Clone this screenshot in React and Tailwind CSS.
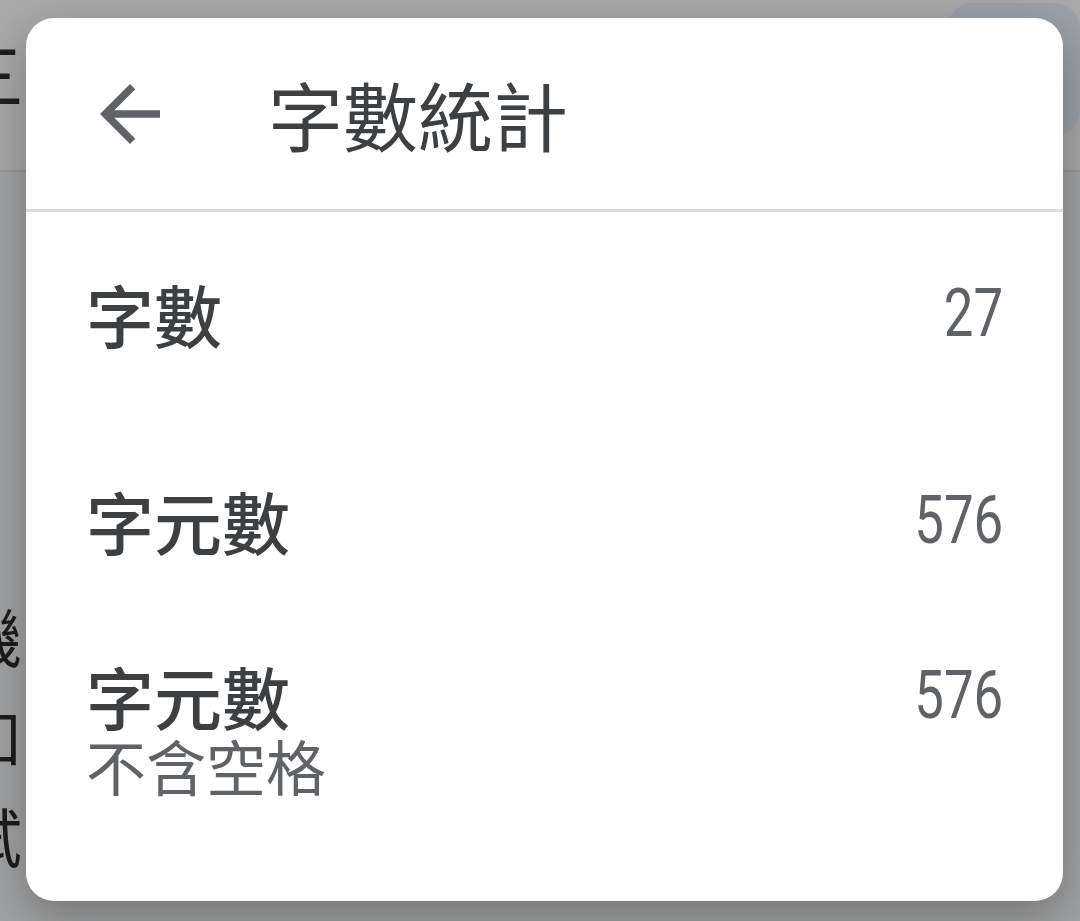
import React from "react";

const cjk = { fontFamily: '"Noto Sans CJK TC", "Noto Sans", sans-serif' };
const num = { fontFamily: 'Roboto, "Liberation Sans", sans-serif' };

function Row({ label, sub, value, className }) {
  return (
    <div className={"flex justify-between px-[60px] " + className}>
      <div className="flex flex-col">
        <span style={cjk} className="text-[68px] leading-[68px] font-medium text-[#3c4043]">{label}</span>
        {sub && (
          <span style={cjk} className="mt-[5px] text-[60px] leading-[60px] text-[#5f6368]">{sub}</span>
        )}
      </div>
      <span style={num} className="text-[66px] leading-[68px] text-[#5f6368] scale-x-[0.8] origin-right">{value}</span>
    </div>
  );
}

export default function App() {
  return (
    <div className="relative w-[1080px] h-[921px] overflow-hidden bg-[#a5a5a5]">
      {/* underlying page */}
      <div className="flex flex-col h-full">
        <div className="h-[172px] bg-[#a9a9a9] border-b-2 border-[#989898] flex items-start justify-between">
          <span style={cjk} className="-ml-[48px] mt-[36px] text-[72px] leading-none text-[#1f1f1f]">三</span>
          <div className="mt-[3px] w-[133px] h-[134px] rounded-[26px] bg-[#9ca1aa]" />
        </div>
        <div className="flex-1 flex flex-col pt-[412px] bg-[#a2a3a4]">
          {["機", "如", "試"].map((c) => (
            <span key={c} style={cjk} className="-ml-[42px] text-[64px] leading-[100px] text-[#1c1c1c]">{c}</span>
          ))}
        </div>
      </div>

      {/* dialog */}
      <div className="absolute left-[26px] top-[18px] w-[1037px] h-[883px] rounded-[28px] bg-white shadow-[0_16px_50px_rgba(0,0,0,0.3)] flex flex-col overflow-hidden">
        <div className="h-[191px] flex items-center pl-[85px] shrink-0">
          <svg viewBox="0 0 24 24" className="w-[90px] h-[90px] -ml-[26px]" fill="#5f6368">
            <path d="M20 11H7.83l5.59-5.59L12 4l-8 8 8 8 1.41-1.41L7.83 13H20v-2z" />
          </svg>
          <span style={cjk} className="ml-[93px] text-[75px] leading-none text-[#3c4043]">字數統計</span>
        </div>
        <div className="h-[3px] bg-[#dcdde0] shrink-0" />
        <div className="flex flex-col">
          <Row label="字數" value="27" className="h-[204px] items-center" />
          <Row label="字元數" value="576" className="h-[210px] items-center" />
          <Row label="字元數" sub="不含空格" value="576" className="pt-[36px] items-start" />
        </div>
      </div>
    </div>
  );
}
